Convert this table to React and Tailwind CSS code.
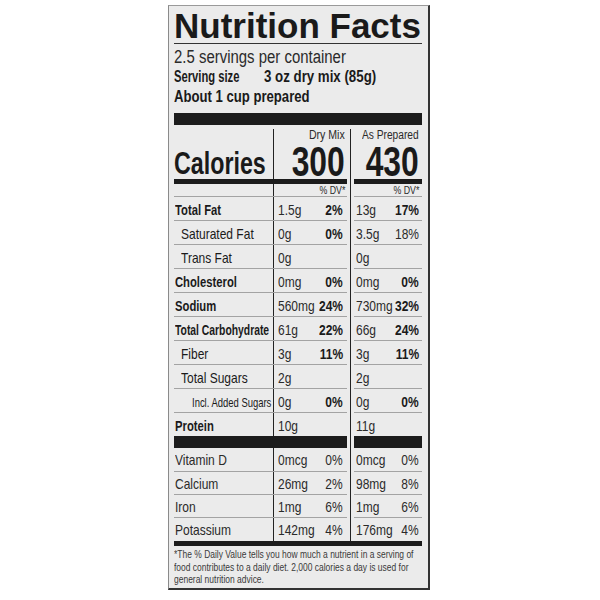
const F = "font-['Liberation_Sans',Arial,sans-serif]";

// condensed text helpers (Helvetica Condensed look)
const cl = 'inline-block whitespace-nowrap origin-left scale-x-[0.8]'
const clb = 'inline-block whitespace-nowrap origin-left scale-x-[0.75] font-bold'
const clt = 'inline-block whitespace-nowrap origin-left scale-x-[0.69] font-bold'
const cls = 'inline-block whitespace-nowrap origin-left scale-x-[0.7] text-[13.5px]'
const cr = 'inline-block whitespace-nowrap origin-right scale-x-[0.8]'
const crb = 'inline-block whitespace-nowrap origin-right scale-x-[0.8] font-bold text-[#1a1a1a]'

const rows = [
  { name: 'Total Fat', n: clb, d: '1.5g', dp: '2%', dpb: true, p: '13g', pp: '17%', ppb: true },
  { name: 'Saturated Fat', n: cl, pl: 'pl-[7px]', d: '0g', dp: '0%', dpb: true, p: '3.5g', pp: '18%' },
  { name: 'Trans Fat', n: cl, pl: 'pl-[7px]', d: '0g', p: '0g' },
  { name: 'Cholesterol', n: clb, d: '0mg', dp: '0%', dpb: true, p: '0mg', pp: '0%', ppb: true },
  { name: 'Sodium', n: clb, d: '560mg', dp: '24%', dpb: true, p: '730mg', pp: '32%', ppb: true },
  { name: 'Total Carbohydrate', n: clt, d: '61g', dp: '22%', dpb: true, p: '66g', pp: '24%', ppb: true },
  { name: 'Fiber', n: cl, pl: 'pl-[7px]', d: '3g', dp: '11%', dpb: true, p: '3g', pp: '11%', ppb: true },
  { name: 'Total Sugars', n: cl, pl: 'pl-[7px]', d: '2g', p: '2g' },
  { name: 'Incl. Added Sugars', n: cls, pl: 'pl-[18px]', d: '0g', dp: '0%', dpb: true, p: '0g', pp: '0%', ppb: true },
  { name: 'Protein', n: clb, d: '10g', p: '11g', last: true },
]

const vitamins = [
  { name: 'Vitamin D', d: '0mcg', dp: '0%', p: '0mcg', pp: '0%', h: 'h-[24px]' },
  { name: 'Calcium', d: '26mg', dp: '2%', p: '98mg', pp: '8%', h: 'h-[23px]' },
  { name: 'Iron', d: '1mg', dp: '6%', p: '1mg', pp: '6%', h: 'h-[23px]' },
  { name: 'Potassium', d: '142mg', dp: '4%', p: '176mg', pp: '4%', h: 'h-[23px]', last: true },
]

function Gap() {
  return (
    <div className="w-[7px] shrink-0 flex">
      <div className="ml-[3px] w-px bg-[#222]" />
    </div>
  )
}

function Vals({ a, pct, bold, pad }) {
  return (
    <div className={`flex-1 min-w-0 flex ${pad}`}>
      <div className="flex-1 min-w-0 flex">
        <span className={cl}>{a}</span>
      </div>
      <div className="flex-1 min-w-0 flex justify-end">
        <span className={bold ? crb : cr}>{pct}</span>
      </div>
    </div>
  )
}

function Row({ r }) {
  const line = r.last ? '' : 'border-b border-[#a3a3a3]'
  return (
    <div className={`flex ${r.last ? 'h-[23px]' : 'h-[24px]'} text-[15px] leading-[20px] text-[#2a2a2a]`}>
      <div className={`w-[173px] shrink-0 flex ${line}`}>
        <div className={`w-[100px] shrink-0 pt-[3px] border-r border-[#222] text-[#1a1a1a] ${r.pl || 'pl-[1px]'}`}>
          <span className={r.n}>{r.name}</span>
        </div>
        <div className="flex-1 min-w-0 flex pt-[3px]">
          <Vals a={r.d} pct={r.dp} bold={r.dpb} pad="pl-[4px] pr-[4px]" />
        </div>
      </div>
      <Gap />
      <div className={`w-[68px] shrink-0 flex pt-[3px] ${line}`}>
        <Vals a={r.p} pct={r.pp} bold={r.ppb} pad="pl-[2px] pr-[3px]" />
      </div>
    </div>
  )
}

function VitRow({ r }) {
  const line = r.last ? '' : 'border-b border-[#a3a3a3]'
  return (
    <div className={`flex ${r.h} text-[15px] leading-[20px] text-[#2a2a2a]`}>
      <div className={`w-[173px] shrink-0 flex ${line}`}>
        <div className="w-[100px] shrink-0 border-r border-[#222] pt-[2px] pl-[1px]">
          <span className={cl}>{r.name}</span>
        </div>
        <div className="flex-1 min-w-0 flex pt-[2px]">
          <Vals a={r.d} pct={r.dp} pad="pl-[4px] pr-[4px]" />
        </div>
      </div>
      <Gap />
      <div className={`w-[68px] shrink-0 flex pt-[2px] ${line}`}>
        <Vals a={r.p} pct={r.pp} pad="pl-[2px] pr-[3px]" />
      </div>
    </div>
  )
}

function Bar({ h }) {
  return (
    <div className={`flex ${h}`}>
      <div className="w-[173px] shrink-0 bg-[#1c1c1c]" />
      <Gap />
      <div className="w-[68px] shrink-0 bg-[#1c1c1c]" />
    </div>
  )
}

export default function App() {
  return (
    <div className="w-[600px] h-[600px] bg-white pt-[5px]">
      <div className={`ml-[168px] w-[262px] h-[585px] bg-[#ebebeb] border-l border-t border-l-[#8a8a8a] border-t-[#9a9a9a] border-r-2 border-b-2 border-r-[#333] border-b-[#333] pl-[5px] pr-[6px] text-[#1a1a1a] overflow-hidden ${F}`}>
        <div className="pt-[2px] font-bold text-[35px] leading-[35px] whitespace-nowrap">Nutrition Facts</div>
        <div className="h-px bg-[#333]" />
        <div className="mt-[3px] h-[20px] text-[18px] leading-[20px] text-[#2a2a2a]">
          <span className="inline-block whitespace-nowrap origin-left scale-x-[0.83]">2.5 servings per container</span>
        </div>
        <div className="text-[16px] leading-[20px] font-bold">
          <div className="flex h-[20px]">
            <div className="w-[90px] shrink-0">
              <span className="inline-block whitespace-nowrap origin-left scale-x-[0.7]">Serving size</span>
            </div>
            <span className="inline-block whitespace-nowrap origin-left scale-x-[0.83]">3 oz dry mix (85g)</span>
          </div>
          <div className="h-[20px]">
            <span className="inline-block whitespace-nowrap origin-left scale-x-[0.82]">About 1 cup prepared</span>
          </div>
        </div>
        <div className="mt-[6px] h-[12px] bg-[#1c1c1c]" />

        <div className="h-[4px]" />
        <div className="flex h-[50px]">
          <div className="w-[173px] shrink-0 flex">
            <div className="w-[100px] shrink-0 border-r border-[#222] flex items-end">
              <span className="inline-block whitespace-nowrap origin-left scale-x-[0.75] text-[31px] leading-[31px] font-bold">
                Calories
              </span>
            </div>
            <div className="flex-1 min-w-0 flex flex-col justify-between items-end pr-[2px]">
              <span className="inline-block whitespace-nowrap origin-right scale-x-[0.88] text-[12px] leading-[13px] text-[#2a2a2a]">
                Dry Mix
              </span>
              <span className="inline-block whitespace-nowrap origin-right scale-x-[0.74] text-[43px] leading-[36px] font-bold">
                300
              </span>
            </div>
          </div>
          <Gap />
          <div className="w-[68px] shrink-0 flex flex-col justify-between items-end pr-[3px]">
            <span className="inline-block whitespace-nowrap origin-right scale-x-[0.85] text-[12px] leading-[13px] text-[#2a2a2a]">
              As Prepared
            </span>
            <span className="inline-block whitespace-nowrap origin-right scale-x-[0.74] text-[43px] leading-[36px] font-bold">
              430
            </span>
          </div>
        </div>
        <Bar h="h-[5px]" />
        <div className="flex h-[13px] text-[11px] leading-[12px] text-[#2a2a2a]">
          <div className="w-[173px] shrink-0 flex border-b border-[#a3a3a3]">
            <div className="w-[100px] shrink-0 border-r border-[#222]" />
            <div className="flex-1 min-w-0 flex justify-end pr-[2px]">
              <span className={cr}>% DV*</span>
            </div>
          </div>
          <Gap />
          <div className="w-[68px] shrink-0 flex justify-end pr-[3px] border-b border-[#a3a3a3]">
            <span className={cr}>% DV*</span>
          </div>
        </div>
        {rows.map((r) => (
          <Row key={r.name} r={r} />
        ))}
        <Bar h="h-[12px]" />
        {vitamins.map((r) => (
          <VitRow key={r.name} r={r} />
        ))}
        <div className="h-[5px] bg-[#1c1c1c]" />
        <div className="pt-[2px] text-[11px] leading-[12.5px] text-[#3a3a3a]">
          <div className="w-max whitespace-nowrap origin-left scale-x-[0.77]">
            *The % Daily Value tells you how much a nutrient in a serving of
            <br />
            food contributes to a daily diet. 2,000 calories a day is used for
            <br />
            general nutrition advice.
          </div>
        </div>
      </div>
    </div>
  )
}
